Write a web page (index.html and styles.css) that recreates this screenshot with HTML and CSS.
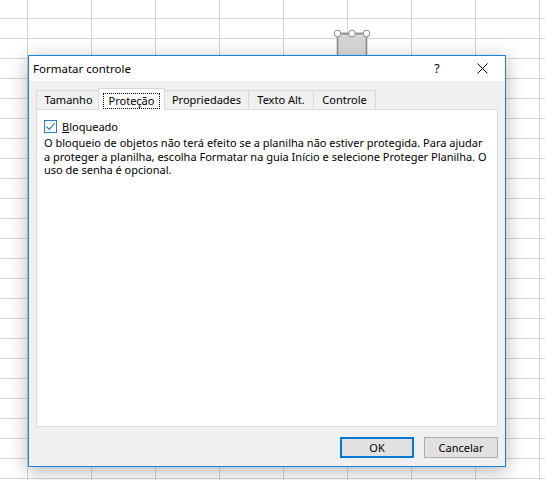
FILE: index.html
```html
<!DOCTYPE html>
<html lang="pt-BR">
<head>
<meta charset="utf-8">
<title>Formatar controle</title>
<link rel="stylesheet" href="styles.css">
</head>
<body>
<div class="sheet">
  <svg class="shape" width="42" height="34" viewBox="0 0 42 34">
    <defs>
      <linearGradient id="shapeFill" x1="0" y1="0" x2="0" y2="1">
        <stop offset="0" stop-color="#d2d2d2"/>
        <stop offset="1" stop-color="#e2e2e2"/>
      </linearGradient>
    </defs>
    <rect x="4.5" y="4.5" width="29" height="40" fill="url(#shapeFill)" stroke="#8a8a8a" stroke-width="1.5"/>
    <line x1="4.5" y1="4.5" x2="33.5" y2="4.5" stroke="#8a8a8a" stroke-width="1.5"/>
    <circle cx="4.5" cy="4.5" r="3.3" fill="#fff" stroke="#8a8a8a" stroke-width="1"/>
    <circle cx="19" cy="4.5" r="3.3" fill="#fff" stroke="#8a8a8a" stroke-width="1"/>
    <circle cx="33.5" cy="4.5" r="3.3" fill="#fff" stroke="#8a8a8a" stroke-width="1"/>
  </svg>

  <div class="dialog">
    <div class="titlebar">
      <span class="title">Formatar controle</span>
      <span class="tbtn help">?</span>
      <span class="tbtn close">
        <svg width="11" height="11" viewBox="0 0 11 11"><path d="M0.5 0.5 L10.5 10.5 M10.5 0.5 L0.5 10.5" stroke="#000" stroke-width="1" fill="none"/></svg>
      </span>
    </div>
    <div class="body">
      <div class="tabs">
        <div class="tab tab-size">Tamanho</div>
        <div class="tab tab-active"><span class="focus">Proteção</span></div>
        <div class="tab tab-props">Propriedades</div>
        <div class="tab tab-alt">Texto Alt.</div>
        <div class="tab tab-ctrl">Controle</div>
      </div>
      <div class="panel">
        <div class="check">
          <span class="box">
            <svg width="11" height="11" viewBox="0 0 11 11"><path d="M1.5 5.5 L4.2 8.3 L9.6 2.2" stroke="#2a7fd5" stroke-width="1.2" fill="none"/></svg>
          </span>
          <span class="label"><u>B</u>loqueado</span>
        </div>
        <p class="desc">O bloqueio de objetos não terá efeito se a planilha não estiver protegida. Para ajudar<br>a proteger a planilha, escolha Formatar na guia Início e selecione Proteger Planilha. O<br>uso de senha é opcional.</p>
      </div>
      <div class="buttons">
        <div class="btn btn-default">OK</div>
        <div class="btn">Cancelar</div>
      </div>
    </div>
  </div>
</div>
</body>
</html>
```
FILE: styles.css
```css
html, body {
  margin: 0;
  padding: 0;
}

body {
  width: 545px;
  height: 480px;
  overflow: hidden;
  font-family: "Noto Sans", "Open Sans", sans-serif;
  font-size: 11px;
  color: #000;
}

.sheet {
  position: relative;
  width: 545px;
  height: 480px;
  background-color: #fff;
  background-image:
    linear-gradient(to right, #d4d4d4 1px, transparent 1px),
    linear-gradient(to bottom, #d4d4d4 1px, transparent 1px);
  background-size: 64px 100%, 100% 20px;
  background-position: 27px 0, 0 18px;
}

.shape {
  position: absolute;
  left: 333px;
  top: 29px;
}

.dialog {
  position: absolute;
  left: 28px;
  top: 55px;
  width: 478px;
  height: 412px;
  box-sizing: border-box;
  border: 1px solid #1883d7;
  background: #f0f0f0;
  box-shadow: 0 4px 18px rgba(0, 0, 0, 0.3);
  display: flex;
  flex-direction: column;
}

.titlebar {
  height: 25px;
  background: #fff;
  display: flex;
  align-items: center;
  flex: none;
}

.title {
  flex: 1;
  padding-left: 4px;
  font-size: 11.5px;
}

.tbtn {
  height: 25px;
  display: flex;
  align-items: center;
  justify-content: center;
}

.help {
  width: 44px;
  font-size: 12.5px;
}

.close {
  width: 46px;
}

.body {
  flex: 1;
  display: flex;
  flex-direction: column;
  padding: 7px 7px 0 7px;
}

.tabs {
  height: 21px;
  display: flex;
  align-items: flex-end;
  flex: none;
}

.tab {
  box-sizing: border-box;
  height: 19px;
  line-height: 18px;
  border: 1px solid #d9d9d9;
  border-bottom: none;
  border-right: none;
  text-align: center;
  white-space: nowrap;
  background: #f0f0f0;
}

.tab-size { width: 64px; }
.tab-props { width: 84px; }
.tab-alt { width: 65px; }
.tab-ctrl { width: 63px; border-right: 1px solid #d9d9d9; }

.tab-active {
  position: relative;
  z-index: 1;
  width: 67px;
  height: 22px;
  margin: 0 -1px -1px -2px;
  padding: 4px 4px 0 4px;
  border-right: 1px solid #d9d9d9;
  background: #fff;
}

.focus {
  display: block;
  box-sizing: border-box;
  height: 16px;
  line-height: 14px;
  border: 1px dotted #000;
}

.panel {
  box-sizing: border-box;
  height: 318px;
  flex: none;
  background: #fff;
  border: 1px solid #d9d9d9;
  padding: 10px 7px 0 7px;
}

.check {
  display: flex;
  align-items: center;
  height: 13px;
}

.box {
  box-sizing: border-box;
  width: 13px;
  height: 13px;
  border: 1px solid #2a7fd5;
  display: flex;
  align-items: center;
  justify-content: center;
  margin-right: 5px;
}

.label {
  line-height: 13px;
}

.desc {
  margin: 3px 0 0 0;
  line-height: 13.5px;
  white-space: nowrap;
}

.buttons {
  display: flex;
  justify-content: flex-end;
  gap: 10px;
  margin-top: 10px;
}

.btn {
  box-sizing: border-box;
  width: 74px;
  height: 21px;
  background: #e1e1e1;
  border: 1px solid #adadad;
  display: flex;
  align-items: center;
  justify-content: center;
}

.btn-default {
  border: 2px solid #0078d7;
}
```
